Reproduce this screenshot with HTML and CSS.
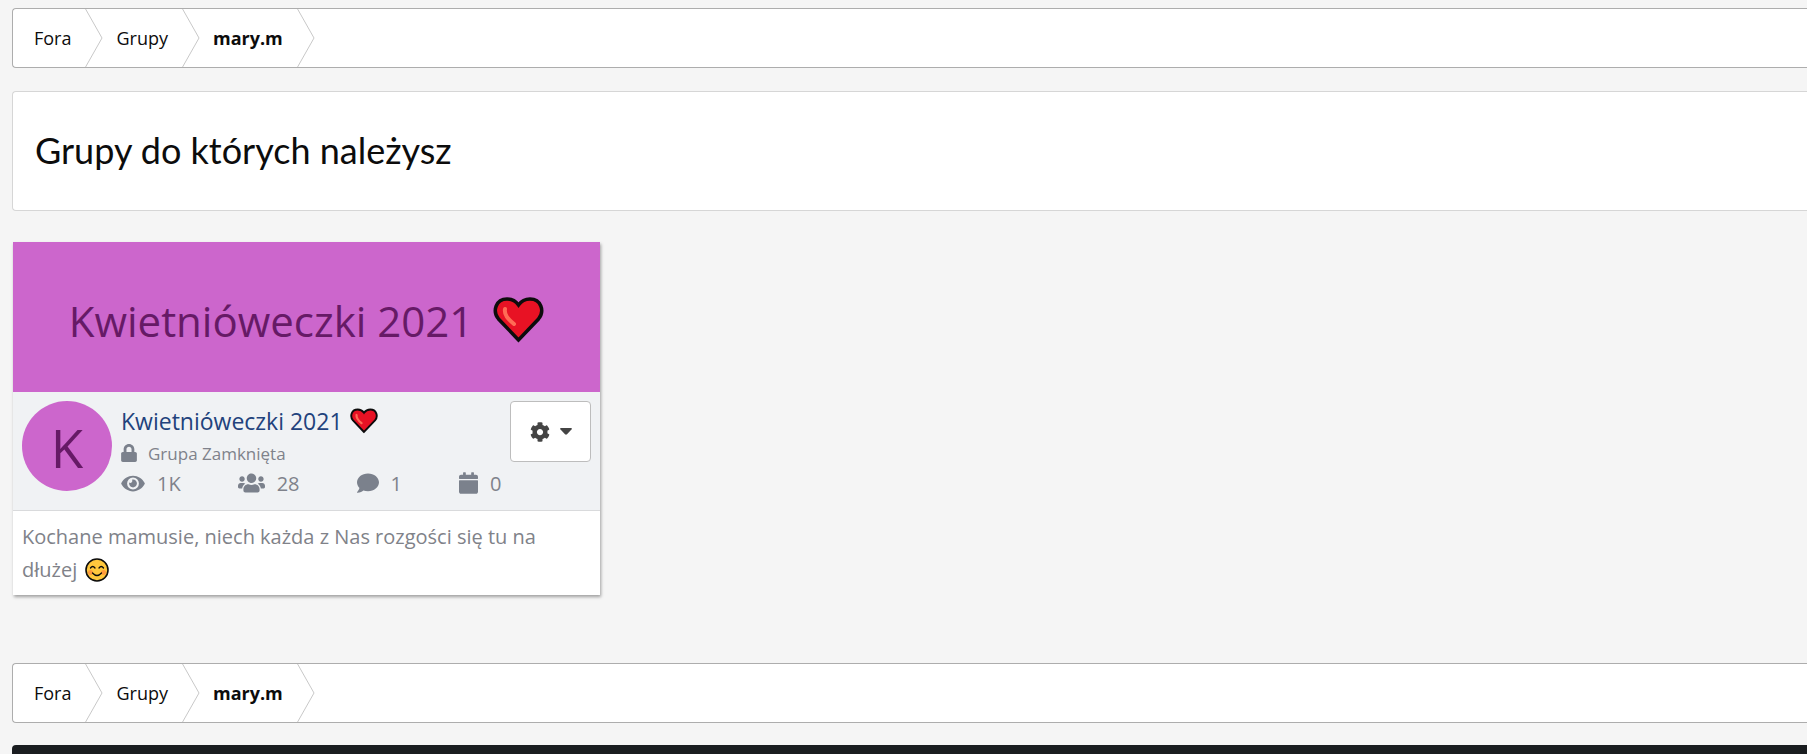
FILE: index.html
```html
<!DOCTYPE html>
<html lang="pl">

<head>
  <meta charset="UTF-8" />
  <meta name="viewport" content="width=device-width, initial-scale=1" />
  <title>Grupy - mary.m</title>
  <link rel="stylesheet" href="styles.css">
</head>

<body>
  <svg class="sprite" aria-hidden="true">
    <symbol id="arrow" viewBox="0 0 18 58">
      <path d="M0 -1L17 29L0 59" fill="none" stroke="#c8c8c8" stroke-width="1" />
    </symbol>
    <symbol id="heart" viewBox="0 0 51 46">
      <path d="M25.5 43L5.500 22C-1 14 3 2 14 2C19 2 23 4.500 25.5 8C28 4.500 32 2 37 2C48 2 52 14 45.500 22Z" fill="#e81224" stroke="#0c0c0c" stroke-width="3.500" stroke-linejoin="miter" />
      <path d="M12 12C11 18 15 22 21 27" fill="none" stroke="#ff6c55" stroke-width="4" stroke-linecap="round" />
    </symbol>
  </svg>

  <nav class="breadcrumbs" aria-label="Nawigacja">
    <a href="#">Fora</a>
    <svg class="arrow"><use href="#arrow" /></svg>
    <a href="#">Grupy</a>
    <svg class="arrow"><use href="#arrow" /></svg>
    <a href="#" class="current">mary.m</a>
    <svg class="arrow"><use href="#arrow" /></svg>
  </nav>

  <header class="page-header">
    <h1>Grupy do których należysz</h1>
  </header>

  <main>
    <article class="group-card">
      <div class="cover">
        <span>Kwietnióweczki 2021</span>
        <svg class="cover-heart"><use href="#heart" /></svg>
      </div>

      <div class="group-info">
        <div class="avatar">K</div>
        <div class="group-details">
          <h2><a href="#">Kwietnióweczki 2021</a> <svg class="title-heart"><use href="#heart" /></svg></h2>
          <p class="group-type">
            <svg class="icon-lock" viewBox="0 0 448 512"><path d="M400 224h-24v-72C376 68.2 307.8 0 224 0S72 68.2 72 152v72H48c-26.5 0-48 21.5-48 48v192c0 26.5 21.5 48 48 48h352c26.5 0 48-21.5 48-48V272c0-26.5-21.5-48-48-48zm-104 0H152v-72c0-39.7 32.3-72 72-72s72 32.3 72 72v72z" /></svg>
            Grupa Zamknięta
          </p>
          <ul class="stats">
            <li>
              <svg class="icon-eye" viewBox="0 0 576 512"><path d="M572.52 241.4C518.29 135.59 410.93 64 288 64S57.68 135.64 3.48 241.41a32.35 32.35 0 0 0 0 29.19C57.71 376.41 165.07 448 288 448s230.32-71.64 284.52-177.41a32.35 32.35 0 0 0 0-29.19zM288 400a144 144 0 1 1 144-144 143.93 143.93 0 0 1-144 144zm0-240a95.31 95.31 0 0 0-25.31 3.79 47.85 47.85 0 0 1-66.9 66.9A95.78 95.78 0 1 0 288 160z" /></svg>
              1K
            </li>
            <li>
              <svg class="icon-users" viewBox="0 0 640 512"><path d="M96 224c35.3 0 64-28.7 64-64s-28.7-64-64-64-64 28.7-64 64 28.7 64 64 64zm448 0c35.3 0 64-28.7 64-64s-28.7-64-64-64-64 28.7-64 64 28.7 64 64 64zm32 32h-64c-17.6 0-33.5 7.1-45.1 18.6 40.3 22.1 68.9 62 75.1 109.4h66c17.7 0 32-14.3 32-32v-32c0-35.3-28.7-64-64-64zm-256 0c61.9 0 112-50.1 112-112S381.9 32 320 32 208 82.1 208 144s50.1 112 112 112zm76.8 32h-8.3c-20.8 10-43.9 16-68.5 16s-47.6-6-68.5-16h-8.3C179.6 288 128 339.6 128 403.2V432c0 26.5 21.5 48 48 48h288c26.5 0 48-21.5 48-48v-28.8c0-63.6-51.6-115.2-115.2-115.2zm-223.7-13.4C161.5 263.1 145.6 256 128 256H64c-35.3 0-64 28.7-64 64v32c0 17.7 14.3 32 32 32h65.9c6.3-47.4 34.9-87.3 75.2-109.4z" /></svg>
              28
            </li>
            <li>
              <svg class="icon-comment" viewBox="0 0 512 512"><path d="M256 32C114.6 32 0 125.1 0 240c0 49.6 21.4 95 57 130.7C44.5 421.1 2.7 466 2.2 466.5c-2.2 2.3-2.8 5.7-1.5 8.7S4.8 480 8 480c66.3 0 116-31.8 140.6-51.4 32.7 12.3 69 19.4 107.4 19.4 141.4 0 256-93.1 256-208S397.4 32 256 32z" /></svg>
              1
            </li>
            <li>
              <svg class="icon-calendar" viewBox="0 0 448 512"><path d="M12 192h424c6.6 0 12 5.4 12 12v260c0 26.5-21.5 48-48 48H48c-26.5 0-48-21.5-48-48V204c0-6.6 5.4-12 12-12zm436-44v-36c0-26.5-21.5-48-48-48h-48V12c0-6.6-5.4-12-12-12h-40c-6.6 0-12 5.4-12 12v52H160V12c0-6.6-5.4-12-12-12h-40c-6.6 0-12 5.4-12 12v52H48C21.5 64 0 85.5 0 112v36c0 6.6 5.4 12 12 12h424c6.6 0 12-5.4 12-12z" /></svg>
              0
            </li>
          </ul>
        </div>
        <button type="button" class="settings" aria-label="Ustawienia grupy">
          <svg class="icon-cog" viewBox="0 0 512 512"><path d="M487.4 315.7l-42.6-24.6c4.3-23.2 4.3-47 0-70.2l42.6-24.6c4.9-2.8 7.1-8.6 5.5-14-11.1-35.6-30-67.8-54.7-94.6-3.8-4.1-10-5.1-14.8-2.3L380.8 110c-17.9-15.4-38.5-27.3-60.8-35.1V25.8c0-5.6-3.9-10.5-9.4-11.7-36.7-8.2-74.3-7.8-109.2 0-5.5 1.2-9.4 6.1-9.4 11.7V75c-22.2 7.9-42.8 19.8-60.8 35.1L88.7 85.5c-4.9-2.8-11-1.9-14.8 2.3-24.7 26.7-43.6 58.9-54.7 94.6-1.7 5.4.6 11.2 5.5 14L67.3 221c-4.3 23.2-4.3 47 0 70.2l-42.6 24.6c-4.9 2.8-7.1 8.6-5.5 14 11.1 35.6 30 67.8 54.7 94.6 3.8 4.1 10 5.1 14.8 2.3l42.6-24.6c17.9 15.4 38.5 27.3 60.8 35.1v49.2c0 5.6 3.9 10.5 9.4 11.7 36.7 8.2 74.3 7.8 109.2 0 5.5-1.2 9.4-6.1 9.4-11.7v-49.2c22.2-7.9 42.8-19.8 60.8-35.1l42.6 24.6c4.9 2.8 11 1.9 14.8-2.3 24.7-26.7 43.6-58.9 54.7-94.6 1.5-5.5-.7-11.3-5.6-14.1zM256 336c-44.1 0-80-35.9-80-80s35.9-80 80-80 80 35.9 80 80-35.9 80-80 80z" /></svg>
          <svg class="icon-caret" viewBox="0 0 12 7"><path d="M1 0H11Q12.5 .3 11.5 1.4L7 6.3Q6 7.2 5 6.3L.5 1.4Q-.5 .3 1 0Z" /></svg>
        </button>
      </div>

      <p class="description">
        Kochane mamusie, niech każda z Nas rozgości się tu na dłużej
        <svg class="smile" viewBox="0 0 24 24">
          <circle cx="12" cy="12" r="11" fill="#ffc83d" stroke="#0c0c0c" stroke-width="1.6" />
          <circle cx="5.5" cy="14.5" r="2.5" fill="#ff9a3d" />
          <circle cx="18.5" cy="14.5" r="2.5" fill="#ff9a3d" />
          <path d="M5.5 10Q7.7 7 10 10M14 10Q16.3 7 18.5 10M7.5 15Q12 20 16.5 15" fill="none" stroke="#0c0c0c" stroke-width="1.3" stroke-linecap="round" />
        </svg>
      </p>
    </article>
  </main>

  <nav class="breadcrumbs" aria-label="Nawigacja dolna">
    <a href="#">Fora</a>
    <svg class="arrow"><use href="#arrow" /></svg>
    <a href="#">Grupy</a>
    <svg class="arrow"><use href="#arrow" /></svg>
    <a href="#" class="current">mary.m</a>
    <svg class="arrow"><use href="#arrow" /></svg>
  </nav>

  <footer></footer>
</body>

</html>
```
FILE: styles.css
```css
* {
  box-sizing: border-box;
}

body {
  margin: 0;
  padding: 8px 0 0 12px;
  font-family: "Segoe UI", "Open Sans", sans-serif;
  font-size: 20px;
  background-color: #f5f5f5;
  color: #0c0c0c;
}

a {
  text-decoration: none;
  color: inherit;
}

h1,
h2,
p {
  margin: 0;
  font-weight: 400;
}

.sprite {
  display: none;
}

.breadcrumbs {
  display: flex;
  align-items: center;
  height: 60px;
  padding-left: 21px;
  background-color: #fff;
  border: 1px solid #adadad;
  border-right: none;
  border-radius: 4px 0 0 4px;
  font-size: 18px;
}

.breadcrumbs .current {
  font-weight: 700;
}

.arrow {
  width: 18px;
  height: 58px;
  margin: 0 13px 0 14px;
}

.page-header {
  display: flex;
  align-items: center;
  min-height: 120px;
  margin: 23px 0 31px;
  padding: 0 22px 2px;
  background-color: #fff;
  border: 1px solid #d6d6d6;
  border-right: none;
  border-radius: 4px 0 0 4px;
}

.page-header h1 {
  font-family: Lato, sans-serif;
  font-size: 36px;
}

main {
  padding: 0 1px 68px;
}

.group-card {
  max-width: 587px;
  background-color: #fff;
  box-shadow: 1px 2px 3px rgba(0, 0, 0, 0.35);
}

.cover {
  display: flex;
  justify-content: center;
  align-items: center;
  gap: 20px;
  height: 150px;
  padding-top: 6px;
  background-color: #cc66cc;
  color: #661a66;
  font-size: 42px;
}

.cover-heart {
  width: 51px;
  height: 46px;
}

.group-info {
  display: flex;
  gap: 9px;
  align-items: flex-start;
  padding: 9px;
  min-height: 119px;
  background-color: #f0f2f4;
  border-bottom: 1px solid #d9dadc;
}

.avatar {
  flex-shrink: 0;
  width: 90px;
  height: 90px;
  border-radius: 50%;
  background-color: #cc66cc;
  color: #661a66;
  font-size: 53px;
  line-height: 94px;
  text-align: center;
}

.group-details {
  flex: 1;
  min-width: 0;
  color: #7f828b;
}

.group-details svg {
  fill: #7b818c;
}

.group-details h2 {
  display: flex;
  align-items: center;
  gap: 7px;
  height: 39px;
  color: #22427c;
  font-size: 23px;
}

.title-heart {
  width: 28px;
  height: 26px;
}

.group-type {
  display: flex;
  align-items: center;
  gap: 11px;
  height: 26px;
  font-size: 17px;
}

.icon-lock {
  width: 16px;
  height: 18px;
}

.stats {
  display: flex;
  gap: 57px;
  margin: 0;
  padding: 0;
  list-style: none;
}

.stats li {
  display: flex;
  align-items: center;
  gap: 12px;
  height: 34px;
}

.icon-eye {
  width: 24px;
  height: 21px;
}

.icon-users {
  width: 27px;
  height: 22px;
}

.icon-comment {
  width: 22px;
  height: 22px;
}

.icon-calendar {
  width: 19px;
  height: 22px;
}

.settings {
  display: flex;
  flex-shrink: 0;
  justify-content: center;
  align-items: center;
  gap: 10px;
  width: 81px;
  height: 61px;
  margin-left: -9px;
  padding: 0;
  background-color: #fff;
  border: 1px solid #bdbdbd;
  border-radius: 4px;
  fill: #444;
  cursor: pointer;
}

.icon-cog {
  width: 20px;
  height: 20px;
}

.icon-caret {
  width: 12px;
  height: 7px;
}

.description {
  padding: 9px;
  color: #808289;
  line-height: 33px;
}

.smile {
  width: 24px;
  height: 24px;
  margin-left: 3px;
  vertical-align: -5px;
}

footer {
  height: 60px;
  margin-top: 22px;
  background-color: #1a1d20;
  border-radius: 4px 0 0 0;
}
```
